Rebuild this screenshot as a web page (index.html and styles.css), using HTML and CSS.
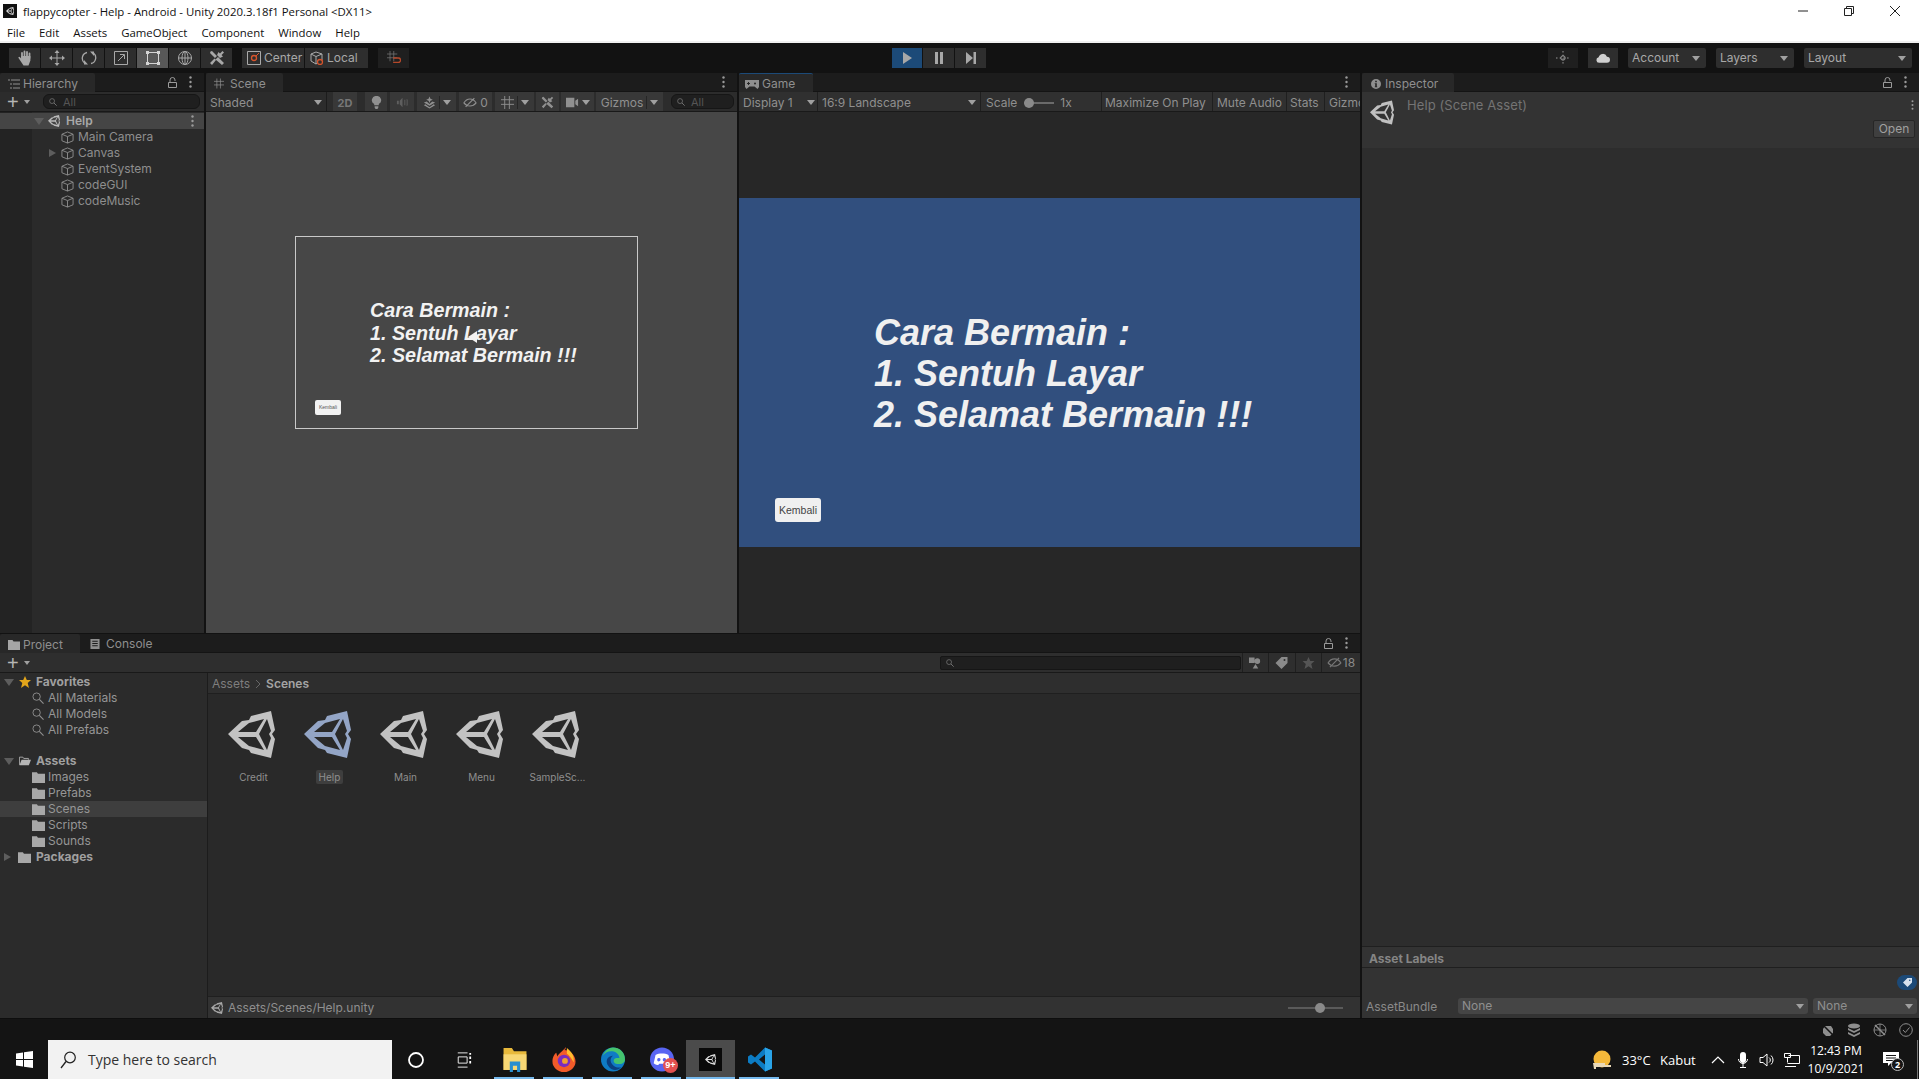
FILE: index.html
```html
<!DOCTYPE html>
<html lang="en">
<head>
<meta charset="utf-8">
<title>flappycopter - Help - Android - Unity 2020.3.18f1 Personal &lt;DX11&gt;</title>
<link rel="stylesheet" href="styles.css">
</head>
<body>
<svg class="defs" width="0" height="0" aria-hidden="true">
  <defs>
    <symbol id="unity" viewBox="0 0 47 47"><path fill-rule="evenodd" d="M0 23 14 10 21 9 23 5 43 0 47 19 44 23 47 28 43 47 23 42 21 39 14 37ZM10 21H28L36 8 21 12ZM39 8 31 23 39 39 43 27 41 23 43 20ZM10 26 21 35 36 39 28 26Z"/></symbol>
    <symbol id="cube" viewBox="0 0 14 14"><path fill="none" stroke="currentColor" d="M7 1 13 3.500V10.500L7 13 1 10.500V3.500ZM1 3.500 7 6 13 3.500M7 6V13"/></symbol>
    <symbol id="folder" viewBox="0 0 12 11"><path d="M0 1H4.500L5.500 2.500H12V11H0Z"/></symbol>
    <symbol id="mag" viewBox="0 0 13 13"><circle cx="5" cy="5" r="4" fill="none" stroke="currentColor"/><path d="M8 8 12.500 12.500" stroke="currentColor" stroke-width="1.200"/></symbol>
    <symbol id="tools" viewBox="0 0 16 16"><path fill="currentColor" d="M3 1 8 6 6 8 1 3 1.500 1.500ZM13.500 1 15 2.500 12.500 5 14 6.500 11 8 8 5 9.500 2 11 3.500ZM6.500 9.500 9 7 15 13 13 15ZM7 10 3 15 1 13 5.500 8.500Z"/></symbol>
    <symbol id="lock" viewBox="0 0 9 11"><path fill="none" stroke="currentColor" d="M.5 5.500H8.500V10.500H.5ZM2 5.500V3A2.500 2.500 0 0 1 7 3V4"/></symbol>
    <symbol id="kebab" viewBox="0 0 3 12"><circle cx="1.500" cy="1.500" r="1.200"/><circle cx="1.500" cy="6" r="1.200"/><circle cx="1.500" cy="10.500" r="1.200"/></symbol>
    <symbol id="eye" viewBox="0 0 16 12"><path fill="none" stroke="currentColor" stroke-width="1.300" d="M1 6.500C3 3 6 2 8 2S13 3 15 6.500C13 9 10.500 10 8 10S3 9 1 6.500ZM3 11 13 1"/></symbol>
    <symbol id="grid" viewBox="0 0 14 14"><path fill="none" stroke="currentColor" d="M4 0V14M9 0V14M0 4H14M0 9H14"/></symbol>
  </defs>
</svg>

<header class="titlebar">
  <div class="title-row">
    <span class="app-badge"><svg class="app-badge-logo"><use href="#unity"/></svg></span>
    <span class="title-text">flappycopter - Help - Android - Unity 2020.3.18f1 Personal &lt;DX11&gt;</span>
    <div class="win-controls">
      <svg class="win-icon" viewBox="0 0 10 10"><path d="M0 5H10" stroke="#222"/></svg>
      <svg class="win-icon" viewBox="0 0 10 10"><path d="M.5 2.500H7.500V9.500H.5ZM2.500 2.500V.5H9.500V7.500H7.500" fill="none" stroke="#222"/></svg>
      <svg class="win-icon" viewBox="0 0 10 10"><path d="M0 0 10 10M10 0 0 10" stroke="#222"/></svg>
    </div>
  </div>
  <nav class="menu">
    <span>File</span><span>Edit</span><span>Assets</span><span>GameObject</span><span>Component</span><span>Window</span><span>Help</span>
  </nav>
</header>

<div class="toolbar">
  <div class="tool-group">
    <button class="tool"><svg viewBox="0 0 16 16" class="ti"><path fill="none" stroke="currentColor" stroke-width="1.800" stroke-linecap="round" d="M5 8V3M7.500 7V1.500M10 7V2M12.500 8V3.500"/><path fill="currentColor" d="M1.200 7.500 2.500 6.800 4.200 8.500V6H13.400V10.500L11.500 15.500H6.500Z"/></svg></button>
    <button class="tool"><svg viewBox="0 0 16 16" class="ti"><path fill="none" stroke="currentColor" d="M8 3V13M3 8H13"/><path fill="currentColor" d="M8 0 10.500 3H5.500ZM8 16 10.500 13H5.500ZM0 8 3 5.500V10.500ZM16 8 13 5.500V10.500Z"/></svg></button>
    <button class="tool"><svg viewBox="0 0 16 16" class="ti"><path fill="none" stroke="currentColor" stroke-width="1.300" d="M6 2.500A6 6 0 0 0 3.500 13M10 13.500A6 6 0 0 0 12.500 3"/><path fill="currentColor" d="M3 10V14.500H7ZM13 6V1.500H9Z"/></svg></button>
    <button class="tool"><svg viewBox="0 0 16 16" class="ti"><path fill="none" stroke="currentColor" d="M1.500 1.500H14.500V14.500H1.500ZM5 11 11 5M7 4.500H11.500V9"/></svg></button>
    <button class="tool tool-on"><svg viewBox="0 0 16 16" class="ti"><path fill="none" stroke="currentColor" d="M2.500 2.500H13.500V13.500H2.500Z"/><path fill="currentColor" d="M1 1H4V4H1ZM12 1H15V4H12ZM1 12H4V15H1ZM12 12H15V15H12Z"/></svg></button>
    <button class="tool"><svg viewBox="0 0 16 16" class="ti"><circle cx="8" cy="8" r="6.500" fill="none" stroke="currentColor"/><ellipse cx="8" cy="8" rx="3" ry="6.500" fill="none" stroke="currentColor"/><path fill="none" stroke="currentColor" d="M1.500 8H14.500M8 1.500V14.500"/></svg></button>
    <button class="tool"><svg class="ti"><use href="#tools"/></svg></button>
  </div>
  <div class="pivot-group">
    <button class="pivot"><svg viewBox="0 0 14 14" class="pi"><path fill="none" stroke="#aaa" d="M.5.5H13.500V13.500H.5Z"/><circle cx="7" cy="7" r="2.500" fill="none" stroke="#d8552c" stroke-width="1.300"/><path stroke="#d8552c" d="M9 5 12 2"/></svg>Center</button>
    <button class="pivot pivot-local"><svg viewBox="0 0 14 14" class="pi"><path fill="none" stroke="#aaa" d="M6 1 12 3V9L6 13 1 10V3ZM1 3 6 5.500 12 3M6 5.500V13"/><circle cx="10" cy="11" r="2.500" fill="#2e2e2e" stroke="#d8552c" stroke-width="1.300"/></svg>Local</button>
  </div>
  <button class="snap"><svg viewBox="0 0 16 16" class="pi"><use href="#grid" width="12" height="12" class="snap-grid"/><path fill="none" stroke="#b5482a" stroke-width="1.500" d="M7 8H13A2.500 2.500 0 0 1 13 13H7"/></svg></button>
  <div class="play-group">
    <button class="play play-on"><svg viewBox="0 0 12 12" class="pli"><path d="M2 0 11 6 2 12Z"/></svg></button>
    <button class="play"><svg viewBox="0 0 12 12" class="pli"><path d="M2 0H5V12H2ZM7 0H10V12H7Z"/></svg></button>
    <button class="play"><svg viewBox="0 0 12 12" class="pli"><path d="M1 0 8 6 1 12ZM8.500 0H11V12H8.500Z"/></svg></button>
  </div>
  <div class="account-group">
    <button class="flat-ic flat-dim"><svg viewBox="0 0 14 14" class="pi"><circle cx="7" cy="7" r="2.200" fill="none" stroke="#999"/><path stroke="#999" stroke-dasharray="1.500 2.200" d="M7 0V14M0 7H14"/></svg></button>
    <button class="flat-ic"><svg viewBox="0 0 16 11" class="cloud"><path d="M3.500 11A3.300 3.300 0 0 1 3 4.500 5 5 0 0 1 12.500 4 3.500 3.500 0 0 1 12.500 11Z"/></svg></button>
    <button class="drop drop-acc">Account<i class="caret"></i></button>
    <button class="drop drop-lay">Layers<i class="caret"></i></button>
    <button class="drop drop-out">Layout<i class="caret"></i></button>
  </div>
</div>

<main class="workspace">
  <div class="left-area">
    <div class="top-row">

      <section class="panel hierarchy">
        <div class="tabstrip">
          <div class="tab tab-h"><svg viewBox="0 0 12 10" class="tab-ic"><path stroke="currentColor" d="M0 1H2M3 1H12M2 5H4M5 5H12M2 9H4M5 9H12"/></svg>Hierarchy</div>
          <div class="tab-actions"><svg class="lock"><use href="#lock"/></svg><svg class="kebab"><use href="#kebab"/></svg></div>
        </div>
        <div class="subbar">
          <span class="plus">+</span><i class="caret caret-sm"></i>
          <div class="search search-h"><svg class="s-ic"><use href="#mag"/></svg>All</div>
        </div>
        <div class="h-body">
          <div class="h-scene">
            <i class="tri-down"></i><svg class="h-logo"><use href="#unity"/></svg><b>Help</b>
            <svg class="kebab kebab-end"><use href="#kebab"/></svg>
          </div>
          <div class="h-item"><svg class="cube"><use href="#cube"/></svg>Main Camera</div>
          <div class="h-item"><i class="tri-right"></i><svg class="cube"><use href="#cube"/></svg>Canvas</div>
          <div class="h-item"><svg class="cube"><use href="#cube"/></svg>EventSystem</div>
          <div class="h-item"><svg class="cube"><use href="#cube"/></svg>codeGUI</div>
          <div class="h-item"><svg class="cube"><use href="#cube"/></svg>codeMusic</div>
        </div>
      </section>

      <section class="panel scene">
        <div class="tabstrip">
          <div class="tab tab-s"><svg class="tab-ic tab-grid"><use href="#grid"/></svg>Scene</div>
          <div class="tab-actions"><svg class="kebab"><use href="#kebab"/></svg></div>
        </div>
        <div class="subbar scene-bar">
          <button class="sb sb-shaded">Shaded<i class="caret"></i></button>
          <button class="sb sb-2d">2D</button>
          <button class="sb sb-light"><svg viewBox="0 0 12 14" class="sbi"><path fill="currentColor" d="M6 0A4.500 4.500 0 0 1 8.500 8.500V10H3.500V8.500A4.500 4.500 0 0 1 6 0ZM4 11H8V12.500L7 14H5L4 12.500Z"/></svg></button>
          <button class="sb sb-audio"><svg viewBox="0 0 14 12" class="sbi sbi-dim"><path fill="currentColor" d="M1 4H3V8H1ZM4 4 7 1V11L4 8ZM9 3 10 3V9H9ZM11.500 2 12.500 3V9L11.500 10Z"/></svg></button>
          <button class="sb sb-fx"><svg viewBox="0 0 14 13" class="sbi"><path fill="currentColor" d="M7 0 8 2.500 10.500 3.500 8 4.500 7 7 6 4.500 3.500 3.500 6 2.500ZM1 6.500 4 5.500 7 8 10 5.500 13 6.500 7 10ZM1 9.500 2.500 8.500 7 11.500 11.500 8.500 13 9.500 7 13Z"/></svg><span class="vline"></span><i class="caret"></i></button>
          <button class="sb sb-hid"><svg class="sbi sbi-eye"><use href="#eye"/></svg>0</button>
          <button class="sb sb-gr"><svg class="sbi"><use href="#grid"/></svg><span class="vline"></span><i class="caret"></i></button>
          <button class="sb sb-tools"><svg class="sbi"><use href="#tools"/></svg></button>
          <button class="sb sb-cam"><svg viewBox="0 0 14 10" class="sbi"><path fill="currentColor" d="M0 0H9V10H0ZM10 3 13 1V9L10 7Z"/></svg><i class="caret"></i></button>
          <button class="sb sb-giz">Gizmos<span class="vline"></span><i class="caret"></i></button>
          <div class="search search-s"><svg class="s-ic"><use href="#mag"/></svg>All</div>
        </div>
        <div class="scene-view">
          <div class="scene-frame">
            <p class="scene-copy">Cara Bermain :<br>1. Sentuh Layar<br>2. Selamat Bermain !!!</p>
            <div class="scene-btn">Kembali</div>
            <svg class="cursor" viewBox="0 0 10 12"><path d="M0 6 9 0V12Z"/></svg>
          </div>
        </div>
      </section>

      <section class="panel game">
        <div class="tabstrip">
          <div class="tab tab-g"><svg viewBox="0 0 14 9" class="tab-ic tab-pad"><path fill="currentColor" fill-rule="evenodd" d="M3 0H11A3 3 0 0 1 14 5.500V7L12.500 9 9.500 6.500H4.500L1.500 9 0 7V5.500A3 3 0 0 1 3 0ZM3 2V3H2V4H3V5H4V4H5V3H4V2ZM10 2.500A1 1 0 0 0 10 4.500 1 1 0 0 0 10 2.500Z"/></svg>Game</div>
          <div class="tab-actions"><svg class="kebab"><use href="#kebab"/></svg></div>
        </div>
        <div class="subbar game-bar">
          <div class="gb gb-disp">Display 1<i class="caret"></i></div>
          <div class="gb gb-land">16:9 Landscape<i class="caret"></i></div>
          <div class="gb gb-scale">Scale<span class="scale-track"><span class="scale-knob"></span></span>1x</div>
          <div class="gb gb-max">Maximize On Play</div>
          <div class="gb gb-mute">Mute Audio</div>
          <div class="gb gb-stats">Stats</div>
          <div class="gb gb-giz">Gizmos</div>
        </div>
        <div class="game-view">
          <div class="game-screen">
            <p class="game-copy">Cara Bermain :<br>1. Sentuh Layar<br>2. Selamat Bermain !!!</p>
            <div class="game-btn">Kembali</div>
          </div>
        </div>
      </section>
    </div>

    <section class="panel project">
      <div class="tabstrip">
        <div class="tab tab-p"><svg class="tab-ic p-folder"><use href="#folder"/></svg>Project</div>
        <div class="tab-plain"><svg viewBox="0 0 10 11" class="tab-ic"><path fill-rule="evenodd" fill="currentColor" d="M0 0H10V11H0ZM2 2V3H8V2ZM2 4.500V5.500H8V4.500ZM2 7V8H8V7Z"/></svg>Console</div>
        <div class="tab-actions"><svg class="lock"><use href="#lock"/></svg><svg class="kebab"><use href="#kebab"/></svg></div>
      </div>
      <div class="subbar project-bar">
        <span class="plus">+</span><i class="caret caret-sm"></i>
        <div class="search search-p"><svg class="s-ic"><use href="#mag"/></svg></div>
        <div class="pb"><svg viewBox="0 0 14 12" class="pbi"><path fill="currentColor" d="M0 0H6V6H0ZM9 1A3 3 0 1 1 9 7 3 3 0 0 1 9 1ZM4 12 7 7 10 12Z"/></svg></div>
        <div class="pb"><svg viewBox="0 0 12 12" class="pbi"><path fill="currentColor" fill-rule="evenodd" d="M6 0H12V6L6 12 0 6ZM9 2A1 1 0 1 0 9 4 1 1 0 0 0 9 2Z"/></svg></div>
        <div class="pb"><svg viewBox="0 0 12 12" class="pbi pbi-dim"><path fill="currentColor" d="M6 0 7.800 4H12L8.700 7 10 12 6 9.300 2 12 3.300 7 0 4H4.200Z"/></svg></div>
        <div class="pb pb-eye"><svg class="pbi-eye"><use href="#eye"/></svg>18</div>
      </div>
      <div class="project-body">
        <aside class="tree">
          <div class="t-row t-head"><i class="tri-down"></i><svg viewBox="0 0 12 12" class="t-ic"><path fill="#e2a51b" d="M6 0 7.800 4H12L8.700 7 10 12 6 9.300 2 12 3.300 7 0 4H4.200Z"/></svg>Favorites</div>
          <div class="t-row t-sub"><svg class="t-ic t-mag"><use href="#mag"/></svg>All Materials</div>
          <div class="t-row t-sub"><svg class="t-ic t-mag"><use href="#mag"/></svg>All Models</div>
          <div class="t-row t-sub"><svg class="t-ic t-mag"><use href="#mag"/></svg>All Prefabs</div>
          <div class="t-row t-head t-gap"><i class="tri-down"></i><svg viewBox="0 0 14 11" class="t-ic"><path fill="none" stroke="#b5b5b5" d="M.5 10V1H4.500L5.500 2.500H11V4"/><path fill="#b5b5b5" d="M.5 10.500 3 4H14L11.500 10.500Z"/></svg>Assets</div>
          <div class="t-row t-sub"><svg class="t-ic t-fold"><use href="#folder"/></svg>Images</div>
          <div class="t-row t-sub"><svg class="t-ic t-fold"><use href="#folder"/></svg>Prefabs</div>
          <div class="t-row t-sub t-sel"><svg class="t-ic t-fold"><use href="#folder"/></svg>Scenes</div>
          <div class="t-row t-sub"><svg class="t-ic t-fold"><use href="#folder"/></svg>Scripts</div>
          <div class="t-row t-sub"><svg class="t-ic t-fold"><use href="#folder"/></svg>Sounds</div>
          <div class="t-row t-head"><i class="tri-right tri-flush"></i><svg class="t-ic t-fold"><use href="#folder"/></svg>Packages</div>
        </aside>
        <div class="browser">
          <div class="crumbs">Assets<svg viewBox="0 0 6 10" class="crumb-sep"><path d="M1 1 5 5 1 9" fill="none" stroke="#666"/></svg><b>Scenes</b></div>
          <div class="assets">
            <div class="asset"><svg class="asset-ic"><use href="#unity"/></svg><span class="asset-name">Credit</span></div>
            <div class="asset asset-on"><svg class="asset-ic"><use href="#unity"/></svg><span class="asset-name">Help</span></div>
            <div class="asset"><svg class="asset-ic"><use href="#unity"/></svg><span class="asset-name">Main</span></div>
            <div class="asset"><svg class="asset-ic"><use href="#unity"/></svg><span class="asset-name">Menu</span></div>
            <div class="asset"><svg class="asset-ic"><use href="#unity"/></svg><span class="asset-name">SampleSc...</span></div>
          </div>
          <div class="pathbar">
            <svg class="path-logo"><use href="#unity"/></svg>Assets/Scenes/Help.unity
            <span class="zoom-track"><span class="zoom-knob"></span></span>
          </div>
        </div>
      </div>
    </section>
  </div>

  <section class="panel inspector">
    <div class="tabstrip">
      <div class="tab tab-i"><svg viewBox="0 0 12 12" class="tab-ic"><path fill="currentColor" fill-rule="evenodd" d="M6 0A6 6 0 1 1 6 12 6 6 0 0 1 6 0ZM5 2V4H7V2ZM4.500 5V6H5V9H4.500V10H7.500V9H7V5Z"/></svg>Inspector</div>
      <div class="tab-actions"><svg class="lock"><use href="#lock"/></svg><svg class="kebab"><use href="#kebab"/></svg></div>
    </div>
    <div class="i-header">
      <svg class="i-logo"><use href="#unity"/></svg>
      <span class="i-title">Help (Scene Asset)</span>
      <div class="i-side">
        <svg class="kebab"><use href="#kebab"/></svg>
        <button class="i-open">Open</button>
      </div>
    </div>
    <div class="i-body"></div>
    <div class="i-labels">Asset Labels</div>
    <div class="i-foot">
      <div class="i-tag-row"><span class="i-tag"><svg viewBox="0 0 12 12" class="i-tag-ic"><path fill="#d8e2ee" fill-rule="evenodd" d="M6 0H12V6L6 12 0 6ZM9 2A1 1 0 1 0 9 4 1 1 0 0 0 9 2Z"/></svg></span></div>
      <div class="i-bundle">
        <span class="i-bundle-label">AssetBundle</span>
        <button class="i-drop i-drop-a">None<i class="caret"></i></button>
        <button class="i-drop i-drop-b">None<i class="caret"></i></button>
      </div>
    </div>
  </section>
</main>

<div class="statusbar">
  <svg viewBox="0 0 14 14" class="st-ic"><path fill="#8e8e8e" d="M4 3H10L12 6V10L9 13H5L2 10V6Z"/><path stroke="#141414" stroke-width="1.500" d="M1 1 13 13"/></svg>
  <svg viewBox="0 0 14 14" class="st-ic"><ellipse cx="7" cy="3" rx="6" ry="2.500" fill="#8e8e8e"/><path fill="#8e8e8e" d="M1 5 7 8 13 5V7L7 10 1 7ZM1 9 7 12 13 9V11L7 14 1 11Z"/></svg>
  <svg viewBox="0 0 14 14" class="st-ic"><circle cx="7" cy="7" r="6" fill="none" stroke="#8e8e8e"/><path d="M2 2 12 12" stroke="#8e8e8e" stroke-width="1.500"/><path d="M7 1V13M1 7H13" stroke="#8e8e8e" stroke-width=".8"/></svg>
  <svg viewBox="0 0 14 14" class="st-ic"><circle cx="7" cy="7" r="6.300" fill="none" stroke="#8e8e8e"/><path d="M4 7 6.300 9.500 10.500 4.500" fill="none" stroke="#8e8e8e"/></svg>
</div>

<footer class="taskbar">
  <div class="start"><svg viewBox="0 0 17 17" class="start-ic"><path fill="#fff" d="M0 2.500 7 1.500V8H0ZM8 1.300 17 0V8H8ZM0 9H7V15.500L0 14.500ZM8 9H17V17L8 15.700Z"/></svg></div>
  <div class="tb-search">
    <svg viewBox="0 0 16 18" class="tb-mag"><circle cx="10" cy="6.500" r="5.300" fill="none" stroke="#222" stroke-width="1.200"/><path d="M6 10.500 1 17" stroke="#222" stroke-width="1.300"/></svg>
    Type here to search
  </div>
  <div class="tb-cell tb-cell-wide"><svg viewBox="0 0 16 16" class="tb-ic"><circle cx="8" cy="8" r="7" fill="none" stroke="#fff" stroke-width="1.800"/></svg></div>
  <div class="tb-cell tb-cell-wide"><svg viewBox="0 0 16 18" class="tb-ic"><path fill="none" stroke="#fff" d="M1 1H12M1 17H12M1.500 5.500H11.500V12.500H1.500Z"/><path fill="#fff" d="M14 5H16V8H14ZM14 10H16V13H14ZM14 1H16V3H14Z"/></svg></div>
  <div class="tb-apps">
    <div class="tb-cell tb-open"><svg viewBox="0 0 22 24" class="tb-app"><path fill="#e8b93b" d="M0 1H8L10 4H22V22H0Z"/><path fill="#f7d774" d="M0 7H22V22H0Z"/><path fill="#2a8fd0" d="M6 14H16V24H13V18H9V24H6Z"/></svg></div>
    <div class="tb-cell tb-open"><svg viewBox="0 0 24 26" class="tb-app"><path fill="#f25b2a" d="M12 3C18 3 24 8 24 15A12 11 0 0 1 0 15C0 11 2 7 4 6L5 10C7 6 10 5 14 0 14 2 13 3 12 3Z"/><path fill="#ffbd2e" d="M15 1C20 5 23 9 22 16 20 12 17 8 15 7Z"/><circle cx="12" cy="14.500" r="6.500" fill="#7a2cc0"/><circle cx="13" cy="14.500" r="3" fill="#f0a030"/></svg></div>
    <div class="tb-cell tb-open"><svg viewBox="0 0 26 26" class="tb-app"><circle cx="13" cy="13" r="13" fill="#0f7bc4"/><path fill="#45c46e" d="M2 9C4 3 9 0 13 0 20 0 26 5 26 13 26 17 22 18 19 18 15 18 13 16 14 13 16 10 20 12 20 11 19 6 15 4 11 4 7 4 4 6 2 9Z"/><path fill="#0a3f80" d="M8 20C4 15 7 9 13 9 9 12 10 17 14 20 17 22 20 22 22 21 18 26 11 25 8 20Z"/></svg></div>
    <div class="tb-cell tb-open tb-badge-wrap"><svg viewBox="0 0 26 26" class="tb-app"><circle cx="13" cy="13" r="13" fill="#5865f2"/><path fill="#fff" fill-rule="evenodd" d="M6 8C10 6 16 6 20 8L22 17C20 19 18 19 17 19L16 17.500H10L9 19C8 19 6 19 4 17ZM10 11.500A1.800 1.800 0 1 0 10 15 1.800 1.800 0 0 0 10 11.500ZM16 11.500A1.800 1.800 0 1 0 16 15 1.800 1.800 0 0 0 16 11.500Z"/></svg><span class="tb-badge">9+</span></div>
    <div class="tb-cell tb-open tb-active"><span class="tb-unity"><svg class="tb-unity-logo"><use href="#unity"/></svg></span></div>
    <div class="tb-cell tb-open"><svg viewBox="0 0 24 24" class="tb-app"><path fill="#0c7cc4" d="M17 0 24 3V21L17 24 7 14 3 17 0 15V9L3 7 7 10ZM17 7 11 12 17 17Z"/><path fill="#2aa4e8" d="M17 0 24 3V21L17 24Z"/></svg></div>
  </div>
  <div class="tray">
    <svg viewBox="0 0 18 20" class="tr-weather"><circle cx="9" cy="9" r="8.500" fill="#f5b93a"/><path fill="#e9d9b8" d="M0 13H12V15H18V17H3V19H1Z"/></svg>
    <span class="tr-temp">33°C</span>
    <span class="tr-word">Kabut</span>
    <span class="tr-cell"><svg viewBox="0 0 14 8" class="tr-chev"><path d="M1 7 7 1 13 7" fill="none" stroke="#fff" stroke-width="1.200"/></svg></span>
    <span class="tr-cell"><svg viewBox="0 0 10 16" class="tr-ic"><rect x="2" width="6" height="11" rx="3" fill="#fff"/><path d="M.5 7A4.500 4.500 0 0 0 9.500 7M5 11.500V15M2 15.500H8" fill="none" stroke="#fff"/></svg></span>
    <span class="tr-cell"><svg viewBox="0 0 16 14" class="tr-ic"><path d="M1 4.500H4L8 1V13L4 9.500H1ZM10 4.500A3 3 0 0 1 10 9.500M12 2.500A6 6 0 0 1 12 11.500" fill="none" stroke="#fff"/></svg></span>
    <span class="tr-cell"><svg viewBox="0 0 16 14" class="tr-ic"><path d="M.5.5H6.500V4.500H.5ZM3.500 4.500V9.500M4.500 2.500H15.500V10.500H3.500M1 13.500H12" fill="none" stroke="#fff"/></svg></span>
    <div class="clock"><span>12:43 PM</span><span>10/9/2021</span></div>
    <span class="notif"><svg viewBox="0 0 16 15" class="notif-ic"><path fill="#fff" d="M0 0H16V11H8L5 14V11H0Z"/><path stroke="#141414" d="M3 3.500H13M3 6H13M3 8.500H10"/></svg><span class="notif-n">2</span></span>
    <span class="desk-line"></span>
  </div>
</footer>
</body>
</html>
```

FILE: styles.css
```css
* { box-sizing: border-box; }
html, body { margin: 0; height: 100%; }
body {
  width: 1919px; height: 1079px; overflow: hidden;
  display: flex; flex-direction: column;
  background: #121212; color: #9c9c9c;
  font: 12px/16px Inter, "Liberation Sans", sans-serif;
}
.defs { position: absolute; }
button { font: inherit; color: inherit; border: 0; padding: 0; background: none; }
i { display: block; font-style: normal; flex: none; }
svg { flex: none; fill: currentColor; }

/* title bar */
.titlebar { height: 43px; background: #fff; color: #111; border-bottom: 2px solid #f0f0f0; font-family: "Open Sans", sans-serif; flex: none; }
.title-row { height: 22px; display: flex; align-items: center; padding: 2px 0 0 3px; }
.app-badge { width: 14px; height: 14px; background: #111; display: flex; align-items: center; justify-content: center; margin: -2px 6px 0 0; }
.app-badge-logo { width: 8px; height: 8px; fill: #ddd; }
.title-text { font-size: 11.400px; }
.win-controls { margin: -2px 0 0 auto; display: flex; gap: 36px; padding-right: 19px; align-items: center; }
.win-icon { width: 10px; height: 10px; }
.menu { display: flex; height: 19px; padding: 2px 0 0 7px; gap: 14px; align-items: center; font-size: 11.400px; }

/* top toolbar */
.toolbar { height: 30px; flex: none; background: #121212; display: flex; align-items: flex-start; padding: 5px 0 0 9px; color: #a8a8a8; }
.tool-group { display: flex; gap: 1px; }
.tool { width: 31px; height: 20px; background: #2e2e2e; display: flex; align-items: center; justify-content: center; }
.tool-on { background: #585858; color: #d5d5d5; }
.ti { width: 16px; height: 16px; }
.pivot-group { display: flex; gap: 1px; margin-left: 10px; }
.pivot { width: 62px; height: 20px; background: #2e2e2e; display: flex; align-items: center; gap: 3px; padding-left: 5px; font-size: 12px; }
.pivot-local { width: 63px; }
.pi { width: 14px; height: 14px; }
.snap { width: 31px; height: 20px; background: #1f1f1f; margin-left: 10px; display: flex; align-items: center; justify-content: center; color: #777; }
.snap-grid { color: #777; }
.play-group { display: flex; gap: 1px; margin-left: 483px; }
.play { width: 31px; height: 20px; background: #2e2e2e; display: flex; align-items: center; justify-content: center; fill: #c8c8c8; }
.play-on { background: #1c4a78; width: 30px; fill: #dfe8f2; }
.pli { width: 12px; height: 12px; }
.account-group { display: flex; gap: 10px; margin-left: 562px; }
.flat-ic { width: 30px; height: 20px; background: #2e2e2e; display: flex; align-items: center; justify-content: center; }
.flat-dim { background: #1f1f1f; }
.cloud { width: 14px; height: 10px; fill: #d0d0d0; }
.drop { height: 20px; background: #2e2e2e; border-radius: 2px; display: flex; align-items: center; justify-content: space-between; padding: 0 6px 0 4px; }
.drop-acc, .drop-lay { width: 78px; }
.drop-out { width: 108px; }
.caret { width: 0; height: 0; border: 4px solid transparent; border-top: 5px solid #a0a0a0; border-bottom: 0; }
.caret-sm { border-width: 3px; border-top-width: 4px; border-bottom-width: 0; margin-left: 4px; }

/* workspace */
.workspace { flex: none; height: 945px; display: flex; gap: 2px; background: #121212; }
.left-area { width: 1360px; display: flex; flex-direction: column; gap: 1px; }
.top-row { height: 560px; display: flex; gap: 2px; }
.panel { display: flex; flex-direction: column; min-width: 0; overflow: hidden; }
.hierarchy { width: 204px; background: #272727; }
.scene { width: 531px; background: #474747; }
.game { width: 621px; background: #272727; }
.project { flex: 1; background: #292929; }
.inspector { flex: 1; background: #2d2d2d; }

.tabstrip { height: 19px; flex: none; display: flex; background: #1c1c1c; border-bottom: 1px solid #141414; }
.tab { height: 19px; background: #282828; display: flex; align-items: center; gap: 3px; padding: 2px 0 0 8px; color: #8f8f8f; border-radius: 2px 2px 0 0; }
.tab-h { width: 95px; }
.tab-s { width: 77px; gap: 6px; }
.tab-g { width: 74px; border-top: 1px solid #1c4a78; padding-left: 6px; }
.tab-p { width: 80px; }
.tab-i { width: 92px; }
.tab-plain { display: flex; align-items: center; gap: 5px; padding: 2px 0 0 9px; color: #8f8f8f; }
.tab-ic { width: 12px; height: 10px; }
.tab-grid { width: 10px; height: 11px; }
.tab-pad { width: 14px; height: 9px; }
.p-folder { width: 12px; height: 11px; fill: #a5a5a5; }
.tab-actions { margin-left: auto; display: flex; align-items: center; gap: 12px; padding-right: 12px; color: #9a9a9a; }
.lock { width: 9px; height: 11px; }
.kebab { width: 3px; height: 12px; fill: #9a9a9a; }

.subbar { height: 20px; flex: none; display: flex; align-items: center; background: #2c2c2c; border-bottom: 1px solid #191919; }
.plus { width: 13px; margin-left: 7px; color: #b5b5b5; font: 400 20px/18px "Liberation Sans", sans-serif; }
.search { height: 15px; border-radius: 6px; background: #1f1f1f; border: 1px solid #161616; display: flex; align-items: center; color: #555; font-size: 11px; flex: none; }
.s-ic { width: 8px; height: 8px; margin: 0 6px 0 5px; color: #8a8a8a; }
.search-h { width: 157px; margin-left: 13px; }
.search-s { width: 63px; margin-left: 5px; }
.search-p { width: 301px; height: 14px; margin-left: 910px; border-radius: 2px; }

/* hierarchy */
.h-body { flex: 1; background: linear-gradient(to right, #232323 32px, #2a2a2a 32px); }
.h-scene { height: 16px; margin-top: 1px; display: flex; align-items: center; background: #454545; color: #a8a8a8; padding-left: 34px; }
.h-scene b { font-weight: 600; margin-left: 6px; }
.h-logo { width: 12px; height: 12px; margin-left: 4px; fill: #bbb; }
.kebab-end { margin-left: auto; margin-right: 10px; }
.tri-down { width: 0; height: 0; border: 5px solid transparent; border-top: 7px solid #5d5d5d; border-bottom: 0; }
.tri-right { width: 0; height: 0; border: 4px solid transparent; border-left: 7px solid #5d5d5d; border-right: 0; position: absolute; margin-left: -12px; }
.h-item { height: 16px; display: flex; align-items: center; padding-left: 61px; gap: 4px; color: #8e8e8e; }
.cube { width: 13px; height: 13px; color: #8e8e8e; }

/* scene */
.scene-bar { background: #2c2c2c; gap: 3px; color: #8f8f8f; }
.sb { height: 19px; background: #383838; display: flex; align-items: center; justify-content: center; gap: 3px; color: #909090; padding-top: 2px; }
.sb-shaded { width: 121px; justify-content: space-between; padding: 2px 4px 0 4px; margin-right: 3px; background: #2c2c2c; border-right: 1px solid #1c1c1c; }
.sb-2d { width: 24px; font-weight: 700; font-size: 11px; margin-right: 5px; color: #777; }
.sb-light { width: 22px; }
.sb-audio { width: 24px; }
.sb-fx { width: 39px; }
.sb-hid { width: 33px; }
.sb-gr { width: 39px; }
.sb-tools { width: 23px; margin-left: -1px; }
.sb-cam { width: 33px; margin-left: -1px; }
.sb-giz { width: 67px; margin-left: -1px; }
.sbi { width: 13px; height: 13px; }
.sbi-dim { color: #5f5f5f; }
.sbi-eye { width: 14px; height: 11px; }
.vline { width: 1px; height: 13px; background: #262626; }
.scene-view { flex: 1; padding: 124px 0 0 89px; background: #474747; }
.scene-frame { width: 343px; height: 193px; border: 1px solid #c9c9c9; display: flex; flex-direction: column; position: relative; padding: 62px 0 13px 74px; }
.scene-copy { margin: 0; color: #f2f2f2; font: italic 700 19.700px/22.500px "Liberation Sans", sans-serif; white-space: nowrap; }
.scene-btn { margin: auto 0 0 -55px; width: 26px; height: 15px; background: #f2f2f2; border-radius: 2px; color: #555; font: 5px/15px "Liberation Sans", sans-serif; text-align: center; }
.cursor { position: absolute; left: 172px; top: 94px; width: 10px; height: 12px; fill: #f2f2f2; }

/* game */
.game-bar { background: #303030; }
.gb { height: 19px; display: flex; align-items: center; border-right: 1px solid #1f1f1f; padding: 2px 0 0 3px; white-space: nowrap; color: #8f8f8f; flex: none; }
.gb-disp { width: 79px; justify-content: space-between; padding-right: 2px; padding-left: 4px; }
.gb-land { width: 163px; justify-content: space-between; padding: 2px 4px 0 4px; }
.gb-scale { width: 121px; padding-left: 5px; }
.scale-track { width: 30px; height: 2px; background: #6a6a6a; margin: 0 6px 0 7px; position: relative; }
.scale-knob { position: absolute; left: 0; top: -4px; width: 10px; height: 10px; border-radius: 50%; background: #8a8a8a; }
.gb-max { width: 111px; }
.gb-mute { width: 74px; padding-left: 4px; }
.gb-stats { width: 38px; }
.gb-giz { width: 35px; border: 0; overflow: hidden; padding-left: 4px; }
.game-view { flex: 1; padding-top: 86px; }
.game-screen { height: 349px; background: #314f7e; padding: 114px 0 25px 135px; display: flex; flex-direction: column; }
.game-copy { margin: 0; color: #f0f0f0; font: italic 700 36px/41px "Liberation Sans", sans-serif; white-space: nowrap; }
.game-btn { margin: auto 0 0 -99px; width: 46px; height: 24px; border-radius: 3px; background: #f0f0f0; color: #444; font: 10.500px/24px "Liberation Sans", sans-serif; text-align: center; }

/* project */
.project-bar { background: #2e2e2e; }
.pb { width: 26.500px; height: 19px; display: flex; align-items: center; justify-content: center; border-left: 1px solid #1f1f1f; color: #8a8a8a; gap: 1px; flex: none; }
.project-bar .search + .pb { margin-left: 1px; }
.pbi { width: 13px; height: 12px; }
.pbi-dim { color: #555; }
.pb-eye { width: 39px; }
.pbi-eye { width: 15px; height: 11px; color: #777; }
.project-body { flex: 1; display: flex; min-height: 0; }
.tree { width: 208px; border-right: 1px solid #1c1c1c; flex: none; background: #2b2b2b; padding-top: 1px; }
.t-row { height: 16px; display: flex; align-items: center; color: #969696; position: relative; }
.t-head { padding-left: 4px; font-weight: 700; color: #a0a0a0; }
.t-head .t-ic { margin: 0 5px 0 5px; }
.t-sub { padding-left: 32px; }
.t-gap { margin-top: 15px; }
.t-sel { background: #3e3e3e; }
.t-ic { width: 12px; height: 12px; margin-right: 4px; }
.t-mag { color: #8f8f8f; }
.t-fold { fill: #a8a8a8; width: 13px; height: 12px; margin-right: 3px; }
.tri-flush { position: static; margin-left: 0; margin-right: 2px; }
.browser { flex: 1; display: flex; flex-direction: column; min-width: 0; }
.crumbs { height: 21px; flex: none; display: flex; align-items: center; background: #2e2e2e; border-bottom: 1px solid #1f1f1f; padding: 2px 0 0 4px; color: #7e7e7e; }
.crumbs b { font-weight: 600; color: #a4a4a4; }
.crumb-sep { width: 6px; height: 10px; margin: 0 5px; }
.assets { flex: 1; display: flex; align-items: flex-start; padding: 17px 0 0 7.500px; }
.asset { width: 76px; display: flex; flex-direction: column; align-items: center; }
.asset-ic { width: 47px; height: 47px; fill: #c2c2c2; margin-right: 5px; }
.asset-name { margin-top: 12px; height: 14px; padding: 0 3px; border-radius: 2px; color: #8f8f8f; font-size: 10px; line-height: 14px; }
.asset-on .asset-ic { fill: #93a5c6; }
.asset-on .asset-name { background: #3e3e3e; }
.pathbar { height: 22px; flex: none; display: flex; align-items: center; background: #323232; border-top: 1px solid #1f1f1f; padding-left: 3px; color: #8f8f8f; }
.path-logo { width: 12px; height: 12px; margin-right: 5px; fill: #a8a8a8; }
.zoom-track { width: 55px; height: 2px; background: #5a5a5a; margin-left: auto; margin-right: 17px; position: relative; }
.zoom-knob { position: absolute; left: 27px; top: -4px; width: 10px; height: 10px; border-radius: 50%; background: #8a8a8a; }

/* inspector */
.i-header { height: 56px; flex: none; background: #333; display: flex; padding: 8px 4px 0 8px; }
.i-logo { width: 24px; height: 25px; fill: #c0c0c0; }
.i-title { margin-left: 13px; color: #747474; font-size: 13px; line-height: 11px; letter-spacing: .1px; }
.i-side { margin-left: auto; display: flex; flex-direction: column; align-items: flex-end; gap: 10px; }
.i-side .kebab { margin-right: 1.500px; width: 3px; height: 10px; }
.i-open { width: 42px; height: 18px; background: #3f3f3f; border-radius: 2px; color: #a0a0a0; border: 1px solid #262626; }
.i-body { flex: 1; border-bottom: 1px solid #1f1f1f; }
.i-labels { height: 21px; flex: none; background: #333; border-bottom: 1px solid #1f1f1f; padding: 1px 0 0 7px; font-weight: 700; line-height: 21px; color: #858585; }
.i-foot { height: 50px; flex: none; background: #333; padding-top: 7px; }
.i-tag-row { height: 15px; display: flex; justify-content: flex-end; padding-right: 2px; margin-bottom: 7px; }
.i-tag { width: 20px; height: 15px; border-radius: 8px; background: #1c4a78; display: flex; align-items: center; justify-content: center; }
.i-tag-ic { width: 9px; height: 9px; }
.i-bundle { display: flex; align-items: center; padding-left: 4px; color: #8a8a8a; }
.i-bundle-label { width: 92px; padding-top: 2px; }
.i-drop { height: 16px; background: #454545; border-radius: 3px; display: flex; align-items: center; justify-content: space-between; padding: 0 4px; color: #8f8f8f; }
.i-drop-a { width: 350px; margin-right: 5px; }
.i-drop-b { width: 104px; }

/* status */
.statusbar { height: 22px; flex: none; background: #141414; display: flex; justify-content: flex-end; align-items: center; gap: 12px; padding-right: 6px; border-top: 1px solid #0e0e0e; }
.st-ic { width: 14px; height: 14px; }

/* taskbar */
.taskbar { height: 39px; flex: none; background: #141414; display: flex; align-items: stretch; color: #fff; font-family: "Open Sans", sans-serif; }
.start { width: 48px; display: flex; align-items: center; justify-content: center; }
.start-ic { width: 17px; height: 17px; }
.tb-search { width: 344px; background: #f2f2f2; color: #333; display: flex; align-items: center; padding: 1px 0 0 12px; gap: 12px; font-size: 14px; }
.tb-mag { width: 16px; height: 18px; }
.tb-cell { width: 49px; display: flex; align-items: center; justify-content: center; position: relative; }
.tb-cell-wide { width: 48px; }
.tb-ic { width: 16px; height: 16px; }
.tb-apps { display: flex; margin-left: 2px; }
.tb-open::after { content: ""; position: absolute; left: 4px; right: 5px; bottom: 0; height: 2px; background: #76b9ed; }
.tb-app { width: 24px; height: 25px; }
.tb-active { background: #4b4b4b; }
.tb-active::after { left: 0; right: 0; }
.tb-unity { width: 23px; height: 23px; background: #0a0a0a; display: flex; align-items: center; justify-content: center; }
.tb-unity-logo { width: 11px; height: 11px; fill: #ddd; }
.tb-badge { position: absolute; left: 26px; top: 18px; width: 15px; height: 15px; border-radius: 50%; background: #e25050; color: #fff; font: 700 9px/15px "Liberation Sans", sans-serif; text-align: center; }
.tray { margin-left: auto; display: flex; align-items: center; }
.tr-weather { width: 18px; height: 20px; margin-right: 11px; }
.tr-temp { width: 38px; font-size: 13px; padding-top: 1px; }
.tr-word { width: 46px; font-size: 13px; padding-top: 1px; }
.tr-cell { width: 24.500px; display: flex; justify-content: center; }
.tr-chev { width: 14px; height: 8px; }
.tr-ic { width: 16px; height: 16px; }
.clock { width: 60px; margin-left: 2px; display: flex; flex-direction: column; align-items: center; font-size: 12px; line-height: 18px; }
.notif { width: 46px; margin-left: 2px; position: relative; display: flex; justify-content: center; }
.notif-ic { width: 16px; height: 15px; }
.notif-n { position: absolute; left: 23px; top: 6px; width: 13px; height: 13px; border-radius: 50%; background: #141414; border: 1px solid #bbb; font: 700 9px/11px "Open Sans", sans-serif; text-align: center; }
.desk-line { width: 1px; height: 39px; background: #777; margin-left: 3px; margin-right: 1px; }
```
